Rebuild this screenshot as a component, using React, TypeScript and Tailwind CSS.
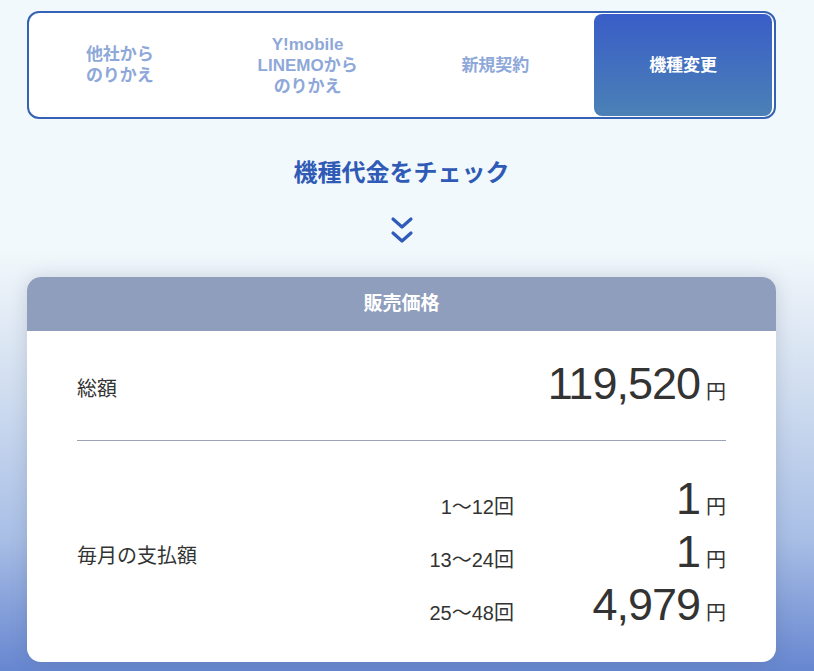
import React from "react";

const tabs = [
  { label: ["他社から", "のりかえ"], active: false },
  { label: ["Y!mobile", "LINEMOから", "のりかえ"], active: false },
  { label: ["新規契約"], active: false },
  { label: ["機種変更"], active: true },
];

const monthly = [
  { period: "1〜12回", amount: "1" },
  { period: "13〜24回", amount: "1" },
  { period: "25〜48回", amount: "4,979" },
];

const DoubleChevron = () => (
  <svg width="24" height="32" viewBox="0 0 24 32" fill="none">
    <path d="M3 4 L12 12 L21 4" stroke="#2f5cb8" strokeWidth="3.2" strokeLinecap="round" strokeLinejoin="round" />
    <path d="M3 18 L12 26 L21 18" stroke="#2f5cb8" strokeWidth="3.2" strokeLinecap="round" strokeLinejoin="round" />
  </svg>
);

const Yen = () => <span className="ml-[6px] text-[20px] leading-none">円</span>;

const App = () => {
  return (
    <div className="min-h-[671px] w-full pt-[11px] pb-[9px] bg-[linear-gradient(to_bottom,#f2f9fc_0%,#f2f9fc_37%,#e4ecf6_46%,#cddbef_60%,#a9bfe6_80%,#6686d0_100%)] font-['Liberation_Sans','Noto_Sans_CJK_JP',sans-serif] text-[#333]">
      <div className="ml-[27px] w-[749px]">
        {/* plan tabs */}
        <div className="grid grid-cols-4 gap-[10px] px-[2px] py-px rounded-[12px] border-2 border-[#3562b5] bg-white">
          {tabs.map((tab, i) => (
            <div
              key={i}
              className={
                tab.active
                  ? "h-[102px] flex flex-col items-center justify-center rounded-[8px] bg-[linear-gradient(to_bottom,#395dc7,#4b81b6)] text-white"
                  : "h-[102px] flex flex-col items-center justify-center text-[#8ea8d9]"
              }
            >
              {tab.label.map((line) => (
                <span key={line} className="text-[17px] leading-[21px] font-bold text-center">
                  {line}
                </span>
              ))}
            </div>
          ))}
        </div>

        <h2 className="mt-[36px] text-center text-[24px] leading-[36px] font-bold text-[#2f5bb6]">
          機種代金をチェック
        </h2>
        <div className="mt-[24px] flex justify-center">
          <DoubleChevron />
        </div>

        {/* price card */}
        <div className="mt-[30px] rounded-[14px] bg-white overflow-hidden shadow-[0_0_18px_rgba(60,70,90,0.18)]">
          <div className="h-[54px] flex items-center justify-center bg-[#8f9ebd] text-white text-[19px] font-bold">
            販売価格
          </div>
          <div className="px-[50px]">
            <div className="flex items-center justify-between pt-[30px] pb-[34px]">
              <span className="pt-[11px] text-[20px]">総額</span>
              <div className="flex items-baseline">
                <span className="text-[45px] leading-none tracking-[-1px]">119,520</span>
                <Yen />
              </div>
            </div>
            <div className="h-px bg-[#9ba4b5]" />
            <div className="flex items-center justify-between pt-[35px] pb-[35px]">
              <span className="pt-[9px] text-[20px]">毎月の支払額</span>
              <div className="flex flex-col gap-[8px]">
                {monthly.map((m) => (
                  <div key={m.period} className="flex items-baseline">
                    <span className="w-[120px] text-[20px] leading-none text-right">{m.period}</span>
                    <div className="w-[212px] flex items-baseline justify-end">
                      <span className="text-[45px] leading-none tracking-[-1px]">{m.amount}</span>
                      <Yen />
                    </div>
                  </div>
                ))}
              </div>
            </div>
          </div>
        </div>
      </div>
    </div>
  );
};

export default App;
